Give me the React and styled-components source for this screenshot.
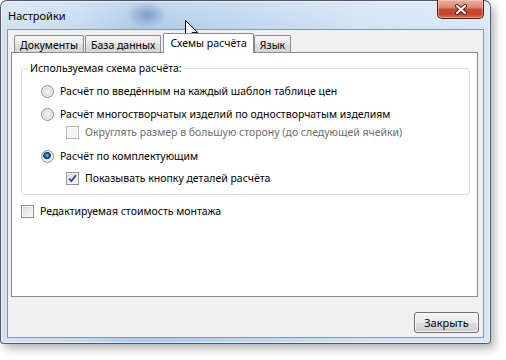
import React from 'react';
import styled, { createGlobalStyle } from 'styled-components';

const GlobalStyle = createGlobalStyle`
  html, body {
    margin: 0;
    padding: 0;
    background: #fff;
  }
  body {
    font-family: "Noto Sans", "Open Sans", sans-serif;
    font-size: 10.5px;
    color: #000;
  }
`;

const Stage = styled.div`
  position: relative;
  width: 506px;
  height: 360px;
  overflow: hidden;
`;

const Window = styled.div`
  width: 491px;
  height: 344px;
  box-sizing: border-box;
  display: flex;
  flex-direction: column;
  padding: 0 6px 5px 6px;
  border: 1px solid rgba(45, 55, 70, 0.8);
  border-radius: 7px 7px 4px 4px;
  background:
    radial-gradient(ellipse 20px 13px at 146px 14px, rgba(85, 125, 180, 0.6), rgba(85, 125, 180, 0)),
    linear-gradient(to bottom, rgba(255, 255, 255, 0.25), rgba(255, 255, 255, 0) 30px),
    linear-gradient(to right, #d2e2f3 0%, #c6daf0 16%, #adc9e8 28%, #b6d0eb 40%, #c1d8ef 55%, #d1e3f5 75%, #d8e7f6 100%);
  box-shadow: inset 0 0 0 1px rgba(255, 255, 255, 0.55), 4px 5px 9px rgba(0, 0, 0, 0.28);
`;

const TitleBar = styled.div`
  height: 28px;
  display: flex;
  align-items: flex-start;
  flex-shrink: 0;
`;

const Title = styled.div`
  padding: 7px 0 0 1px;
  line-height: 16px;
  font-size: 11px;
`;

const CloseButton = styled.div`
  margin: -1px 0 0 auto;
  width: 47px;
  height: 19px;
  box-sizing: border-box;
  display: flex;
  align-items: center;
  justify-content: center;
  border: 1px solid #4e1f17;
  border-top: none;
  border-radius: 0 0 5px 5px;
  background: linear-gradient(to bottom, #eab0a2 0%, #de8a77 40%, #c74a31 52%, #c3432a 78%, #d77152 100%);
  box-shadow: inset 0 0 0 1px rgba(255, 220, 210, 0.45);
`;

const Client = styled.div`
  flex: 1;
  display: flex;
  flex-direction: column;
  padding: 3px 5px 0 3px;
  border: 1px solid #8996a6;
  background: #f0f0f0;
`;

const TabStrip = styled.div`
  display: flex;
  align-items: flex-end;
  height: 19px;
  padding-left: 3px;
`;

const Tab = styled.div`
  position: relative;
  box-sizing: border-box;
  display: flex;
  align-items: center;
  height: ${(p) => (p.$active ? '20px' : '17px')};
  margin: ${(p) => (p.$active ? '0 0 -1px 1px' : '0 1px 0 0')};
  padding: ${(p) => (p.$active ? '0 6px 2px' : '1px 5px 0')};
  border: 1px solid #898c95;
  border-bottom: ${(p) => (p.$active ? 'none' : '0')};
  border-radius: 2px 2px 0 0;
  background: ${(p) =>
    p.$active
      ? '#fff'
      : 'linear-gradient(to bottom, #f3f3f3 0%, #ebebeb 50%, #dedede 51%, #d6d6d6 100%)'};
  z-index: ${(p) => (p.$active ? 1 : 0)};
  white-space: nowrap;
`;

const Panel = styled.div`
  flex: 1;
  display: flex;
  flex-direction: column;
  padding: 0 7px 0 9px;
  border: 1px solid #898c95;
  background: #fff;
`;

const Group = styled.fieldset`
  margin: 7px 0 0;
  padding: 0 0 8px 0;
  border: 1px solid #d5dfe5;
  border-radius: 3px;
  display: flex;
  flex-direction: column;
`;

const Legend = styled.legend`
  margin-left: 6px;
  padding: 0 2px;
  line-height: 16px;
`;

const Option = styled.label`
  display: flex;
  align-items: center;
  gap: 6px;
  height: 16px;
  margin-top: ${(p) => p.$gap}px;
  margin-left: ${(p) => p.$indent || 0}px;
  color: ${(p) => (p.$disabled ? '#6d6d6d' : '#000')};
  white-space: nowrap;
`;

const Radio = styled.span`
  width: 13px;
  height: 13px;
  box-sizing: border-box;
  flex-shrink: 0;
  border-radius: 50%;
  border: 1px solid #8c8e8f;
  background: ${(p) =>
    p.$checked
      ? 'radial-gradient(circle at 45% 40%, #8fd0f5 0, #2a83c2 1.5px, #0e3f73 3px, #163f66 3.6px, #f4f4f4 4.2px, #e2e2e2 5.5px)'
      : 'radial-gradient(circle at 50% 50%, #f7f7f7 0, #e9e9e9 2.5px, #d6d6d6 5.5px)'};
  box-shadow: inset 0 0 0 1px rgba(255, 255, 255, 0.6);
`;

const Box = styled.span`
  width: 13px;
  height: 13px;
  box-sizing: border-box;
  flex-shrink: 0;
  display: flex;
  align-items: center;
  justify-content: center;
  border: 1px solid ${(p) => (p.$disabled ? '#b4b4b4' : '#8e8f8f')};
  background: ${(p) =>
    p.$disabled
      ? '#f4f4f4'
      : 'linear-gradient(135deg, #d0d3d8 0%, #e8e9eb 50%, #f8f8f8 100%)'};
  box-shadow: inset 0 0 0 1px ${(p) => (p.$disabled ? '#fbfbfb' : '#f4f4f4')};
`;

const Footer = styled.div`
  height: 40px;
  flex-shrink: 0;
  display: flex;
  justify-content: flex-end;
  align-items: flex-start;
  padding-top: 15px;
  box-sizing: border-box;
  margin-right: -1px;
`;

const Button = styled.button`
  width: 65px;
  height: 21px;
  padding: 0;
  font: inherit;
  font-size: 11px;
  color: #000;
  border: 1px solid #707070;
  border-radius: 3px;
  background: linear-gradient(to bottom, #f2f2f2 0%, #ebebeb 50%, #dddddd 51%, #cfcfcf 100%);
  box-shadow: inset 0 0 0 1px rgba(255, 255, 255, 0.75);
`;

const Cursor = styled.svg`
  position: absolute;
  left: 185px;
  top: 20px;
  filter: drop-shadow(1px 1px 1px rgba(0, 0, 0, 0.3));
`;

const Check = () => (
  <svg width="9" height="9" viewBox="0 0 9 9">
    <path d="M1 4.6 L3.4 7 L8 1.2" fill="none" stroke="#3c5294" strokeWidth="1.9" />
  </svg>
);

const CloseGlyph = () => (
  <svg width="14" height="11" viewBox="0 0 14 11">
    <path d="M3 2 L11 9 M11 2 L3 9" stroke="#46201a" strokeWidth="4" strokeLinecap="round" />
    <path d="M3 2 L11 9 M11 2 L3 9" stroke="#fff" strokeWidth="2.2" strokeLinecap="round" />
  </svg>
);

export default function App() {
  return (
    <Stage>
      <GlobalStyle />
      <Window>
        <TitleBar>
          <Title>Настройки</Title>
          <CloseButton>
            <CloseGlyph />
          </CloseButton>
        </TitleBar>
        <Client>
          <TabStrip>
            <Tab>Документы</Tab>
            <Tab>База данных</Tab>
            <Tab $active>Схемы расчёта</Tab>
            <Tab>Язык</Tab>
          </TabStrip>
          <Panel>
            <Group>
              <Legend>Используемая схема расчёта:</Legend>
              <Option $gap={7} $indent={19}>
                <Radio />
                Расчёт по введённым на каждый шаблон таблице цен
              </Option>
              <Option $gap={7} $indent={19}>
                <Radio />
                Расчёт многостворчатых изделий по одностворчатым изделиям
              </Option>
              <Option $gap={2} $indent={44} $disabled>
                <Box $disabled />
                Округлять размер в большую сторону (до следующей ячейки)
              </Option>
              <Option $gap={8} $indent={19}>
                <Radio $checked />
                Расчёт по комплектующим
              </Option>
              <Option $gap={6} $indent={44}>
                <Box>
                  <Check />
                </Box>
                Показывать кнопку деталей расчёта
              </Option>
            </Group>
            <Option $gap={8}>
              <Box />
              Редактируемая стоимость монтажа
            </Option>
          </Panel>
          <Footer>
            <Button>Закрыть</Button>
          </Footer>
        </Client>
      </Window>
      <Cursor width="14" height="22" viewBox="0 0 14 22">
        <path d="M0.5 0.5 V17.5 L4.5 13.5 L7.3 20 L9.8 19 L7.1 12.6 H12.5 Z" fill="#fff" stroke="#000" strokeWidth="1" />
      </Cursor>
    </Stage>
  );
}
